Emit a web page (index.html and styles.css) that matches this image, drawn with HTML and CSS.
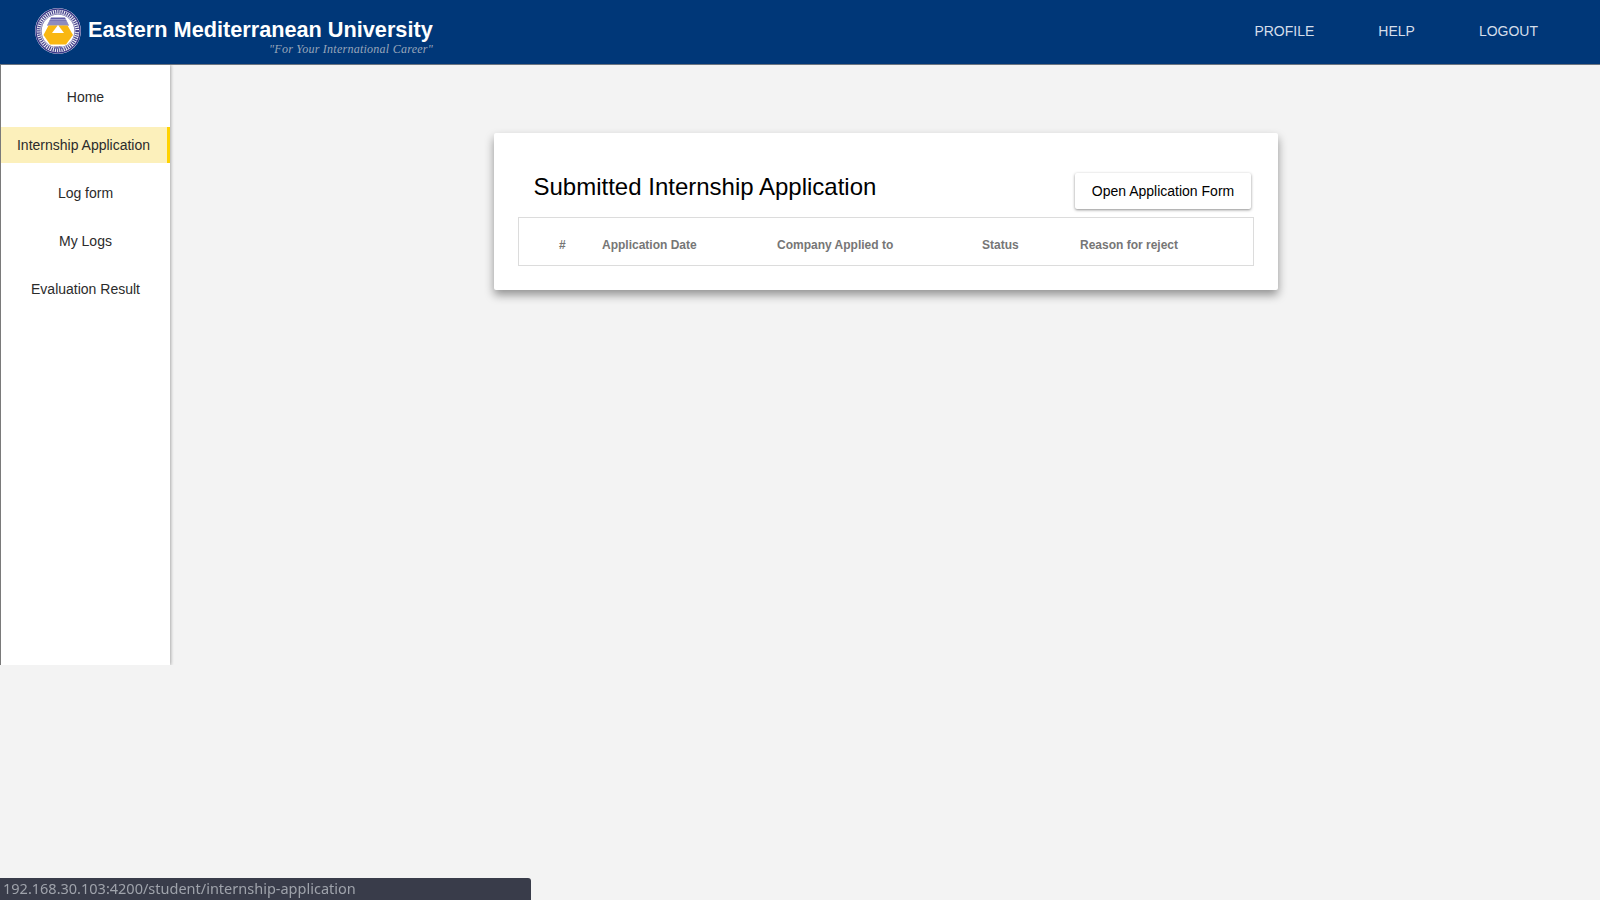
FILE: index.html
```html
<!DOCTYPE html>
<html lang="en">
<head>
<meta charset="utf-8">
<title>Internship Application</title>
<link rel="stylesheet" href="styles.css">
</head>
<body>
<header class="topbar">
  <a class="brand" href="#">
    <svg class="crest" viewBox="0 0 46 46" width="46" height="46" aria-hidden="true">
      <circle cx="23" cy="23" r="23" fill="#ffffff"/>
      <circle cx="23" cy="23" r="22" fill="none" stroke="#3a3788" stroke-width="1.4"/>
      <circle cx="23" cy="23" r="19.2" fill="none" stroke="#4a478f" stroke-width="3.6" stroke-dasharray="1.3 .9"/>
      <circle cx="23" cy="23" r="16.8" fill="#ffffff" stroke="#3a3788" stroke-width=".6"/>
      <path d="M16 9.500h14l4 8H12z" fill="#5d5aa6"/>
      <path d="M14.800 11.800h16.400M13.500 14h19M12.500 16h21" stroke="#ffffff" stroke-width=".6"/>
      <path d="M13.500 17.500h19L38 27l-7 9.500H15L8.500 27z" fill="#f9b712"/>
      <path d="M23 17l6 8H17z" fill="#ffffff"/>
      <text class="crest-year" x="23" y="41">1979</text>
    </svg>
    <span class="wordmark">
      <span class="uni-name">Eastern Mediterranean University</span>
      <span class="motto">"For Your International Career"</span>
    </span>
  </a>
  <nav class="topnav">
    <a href="#">PROFILE</a>
    <a href="#">HELP</a>
    <a href="#">LOGOUT</a>
  </nav>
</header>
<div class="layout">
  <aside class="sidebar">
    <a class="side-link" href="#">Home</a>
    <a class="side-link active" href="#">Internship Application</a>
    <a class="side-link" href="#">Log form</a>
    <a class="side-link" href="#">My Logs</a>
    <a class="side-link" href="#">Evaluation Result</a>
  </aside>
  <main class="content">
    <section class="card">
      <div class="card-head">
        <h1>Submitted Internship Application</h1>
        <button class="open-btn" type="button">Open Application Form</button>
      </div>
      <table class="apps">
        <thead>
          <tr>
            <th class="c-num">#</th>
            <th class="c-date">Application Date</th>
            <th class="c-company">Company Applied to</th>
            <th class="c-status">Status</th>
            <th>Reason for reject</th>
          </tr>
        </thead>
      </table>
    </section>
  </main>
</div>
<div class="statusbar">192.168.30.103:4200/student/internship-application</div>
</body>
</html>
```
FILE: styles.css
```css
* { box-sizing: border-box; }
html, body { height: 100%; }
body {
  margin: 0;
  background: #f3f3f3;
  font-family: "Liberation Sans", Arial, sans-serif;
  color: #212529;
  overflow: hidden;
}
a { text-decoration: none; color: inherit; }

.topbar {
  height: 65px;
  background: #003778;
  border-bottom: 1px solid #6b7480;
  display: flex;
  align-items: center;
  justify-content: space-between;
}
.brand {
  display: flex;
  align-items: center;
  gap: 7px;
  margin-left: 35px;
  margin-top: -2px;
}
.crest { display: block; flex: none; }
.crest-year {
  font-size: 3.600px;
  font-weight: 700;
  fill: #45428a;
  text-anchor: middle;
}
.wordmark { display: flex; flex-direction: column; color: #fff; padding-top: 10px; width: 345px; }
.uni-name {
  font-size: 21.700px;
  line-height: 26px;
  font-weight: 700;
  white-space: nowrap;
}
.motto {
  font-family: "Liberation Serif", serif;
  font-style: italic;
  font-size: 12px;
  line-height: 12px;
  letter-spacing: .25px;
  color: #98a6ba;
  text-align: right;
}
.topnav {
  display: flex;
  gap: 64px;
  margin-right: 62px;
  margin-top: -2px;
  font-size: 14px;
  color: #d5deea;
}

.layout { display: flex; align-items: flex-start; }
.sidebar {
  flex: none;
  width: 170px;
  height: 600px;
  background: #fff;
  border-left: 1px solid #7a7a7a;
  box-shadow: 1px 0 3px rgba(0, 0, 0, .3);
  clip-path: inset(0 -6px 0 0);
  padding-top: 14px;
  display: flex;
  flex-direction: column;
  gap: 12px;
}
.side-link {
  height: 36px;
  line-height: 36px;
  text-align: center;
  font-size: 14px;
  color: #2b2b2b;
}
.side-link.active {
  background: #fcf0bb;
  border-right: 3px solid #ffd200;
  padding-right: 1px;
}

.content {
  flex: 1;
  display: flex;
  justify-content: center;
  padding: 68px 0 0 2px;
}
.card {
  width: 784px;
  height: 157px;
  background: #fff;
  border-radius: 2px;
  box-shadow: 0 5px 10px rgba(0, 0, 0, .4);
  padding: 0 24px;
}
.card-head {
  height: 84px;
  display: flex;
  justify-content: space-between;
  padding: 40px 3px 0 15.500px;
}
h1 {
  margin: 0;
  font-size: 24px;
  line-height: 28px;
  font-weight: 400;
  color: #000;
}
.open-btn {
  width: 176px;
  height: 36px;
  background: #fff;
  border: 0;
  border-radius: 2px;
  box-shadow: 0 1px 3px rgba(0, 0, 0, .45);
  font: 14px "Liberation Sans", Arial, sans-serif;
  color: #000;
}
.apps {
  width: 736px;
  height: 49px;
  table-layout: fixed;
  border-collapse: separate;
  border-spacing: 0;
  border: 1px solid #dcdcdc;
}
.apps th {
  padding: 6px 0 0;
  text-align: left;
  font-size: 12px;
  font-weight: 700;
  color: #767676;
  white-space: nowrap;
}
.apps .c-num { width: 83px; padding-left: 40px; }
.apps .c-date { width: 175px; }
.apps .c-company { width: 205px; }
.apps .c-status { width: 98px; }

.statusbar {
  position: fixed;
  left: 0;
  bottom: 0;
  width: 531px;
  height: 22px;
  padding-left: 3px;
  background: #393c4a;
  border-top-right-radius: 3px;
  font-family: "Noto Sans", sans-serif;
  font-size: 14.500px;
  line-height: 20px;
  color: #9fa3ab;
  white-space: nowrap;
}
```
